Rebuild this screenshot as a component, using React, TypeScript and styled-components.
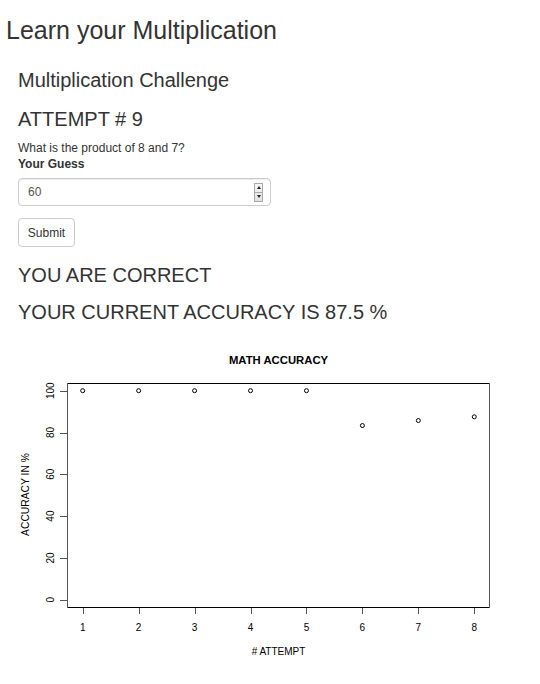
import React from "react";
import styled, { createGlobalStyle } from "styled-components";

const Global = createGlobalStyle`
  html, body { margin: 0; padding: 0; background: #fff; }
  body {
    font-family: "Liberation Sans", Arial, sans-serif;
    color: #333;
  }
`;

const Page = styled.div`
  width: 540px;
  display: flex;
  flex-direction: column;
`;

const Title = styled.h2`
  margin: 15px 0 0 0;
  padding-left: 6px;
  font-size: 25px;
  line-height: 30px;
  font-weight: 400;
  color: #333;
`;

const Main = styled.div`
  padding: 0 18px;
  display: flex;
  flex-direction: column;
  align-items: flex-start;
`;

const Heading = styled.h3<{ $gap: number }>`
  margin: ${(p) => p.$gap}px 0 0 0;
  font-size: 20px;
  line-height: 24px;
  font-weight: 400;
  color: #333;
`;

const Question = styled.p`
  margin: 9px 0 0 0;
  font-size: 12px;
  line-height: 16px;
`;

const Label = styled.label`
  font-size: 12px;
  line-height: 16px;
  font-weight: 700;
`;

const InputBox = styled.div`
  margin-top: 6px;
  box-sizing: border-box;
  width: 253px;
  height: 28px;
  border: 1px solid #ccc;
  border-radius: 4px;
  box-shadow: inset 0 1px 1px rgba(0, 0, 0, 0.075);
  display: flex;
  align-items: center;
  padding: 0 7px 0 9px;
`;

const InputText = styled.span`
  flex: 1;
  font-size: 12px;
  color: #555;
  line-height: 16px;
`;

const Spinner = styled.div`
  width: 9px;
  height: 19px;
  box-sizing: border-box;
  border: 1px solid #a9a9a9;
  display: flex;
  flex-direction: column;
  background: linear-gradient(#f6f6f6, #e2e2e2);
`;

const SpinHalf = styled.div<{ $up?: boolean }>`
  flex: 1;
  display: flex;
  align-items: center;
  justify-content: center;
  border-top: ${(p) => (p.$up ? "none" : "1px solid #a9a9a9")};
  &::after {
    content: "";
    width: 0;
    height: 0;
    border-left: 2px solid transparent;
    border-right: 2px solid transparent;
    ${(p) =>
      p.$up
        ? "border-bottom: 3px solid #222;"
        : "border-top: 3px solid #222;"}
  }
`;

const Button = styled.button`
  margin-top: 12px;
  box-sizing: border-box;
  width: 57px;
  height: 29px;
  padding: 0;
  border: 1px solid #ccc;
  border-radius: 4px;
  background: #fff;
  font-family: "Liberation Sans", Arial, sans-serif;
  font-size: 12px;
  color: #333;
`;

const PlotSvg = styled.svg`
  display: block;
  margin-top: 6px;
  width: 540px;
  height: 354px;
`;

const values = [100, 100, 100, 100, 100, 500 / 6, 600 / 7, 87.5];
const xs = (v: number) => 82.7 + (v - 1) * 55.94;
const ys = (v: number) => 599.7 - v * 2.09;

function Plot() {
  const yTicks = [0, 20, 40, 60, 80, 100];
  const font = "'Liberation Sans', Arial, sans-serif";
  return (
    <PlotSvg viewBox="0 330 540 354">
      <text
        x={278.5}
        y={364}
        textAnchor="middle"
        fontFamily={font}
        fontSize={11.3}
        fontWeight={700}
        fill="#000"
      >
        MATH ACCURACY
      </text>
      <line x1={67} y1={383.5} x2={490} y2={383.5} stroke="#000" strokeWidth={1} />
      <line x1={67} y1={607.5} x2={490} y2={607.5} stroke="#000" strokeWidth={1} />
      <line x1={67.5} y1={383} x2={67.5} y2={608} stroke="#555" strokeWidth={1} />
      <line x1={489.5} y1={383} x2={489.5} y2={608} stroke="#555" strokeWidth={1} />
      {yTicks.map((t) => (
        <g key={t}>
          <line x1={60} y1={Math.round(ys(t)) + 0.5} x2={67} y2={Math.round(ys(t)) + 0.5} stroke="#555" />
          <text
            transform={`translate(53.5 ${ys(t)}) rotate(-90)`}
            textAnchor="middle"
            fontFamily={font}
            fontSize={10}
            fill="#000"
          >
            {t}
          </text>
        </g>
      ))}
      {values.map((_, i) => (
        <g key={i}>
          <line
            x1={Math.round(xs(i + 1)) + 0.5}
            y1={608}
            x2={Math.round(xs(i + 1)) + 0.5}
            y2={614}
            stroke="#555"
          />
          <text
            x={xs(i + 1)}
            y={631}
            textAnchor="middle"
            fontFamily={font}
            fontSize={10}
            fill="#000"
          >
            {i + 1}
          </text>
        </g>
      ))}
      {values.map((v, i) => (
        <circle key={i} cx={xs(i + 1)} cy={ys(v)} r={2} fill="none" stroke="#000" strokeWidth={1} />
      ))}
      <text
        x={278.5}
        y={655}
        textAnchor="middle"
        fontFamily={font}
        fontSize={10}
        fill="#000"
      >
        # ATTEMPT
      </text>
      <text
        transform="translate(29 494.5) rotate(-90)"
        textAnchor="middle"
        fontFamily={font}
        fontSize={10.3}
        fill="#000"
      >
        ACCURACY IN %
      </text>
    </PlotSvg>
  );
}

export default function App() {
  return (
    <Page>
      <Global />
      <Title>Learn your Multiplication</Title>
      <Main>
        <Heading $gap={23}>Multiplication Challenge</Heading>
        <Heading $gap={15}>ATTEMPT # 9</Heading>
        <Question>What is the product of 8 and 7?</Question>
        <Label>Your Guess</Label>
        <InputBox>
          <InputText>60</InputText>
          <Spinner>
            <SpinHalf $up />
            <SpinHalf />
          </Spinner>
        </InputBox>
        <Button>Submit</Button>
        <Heading $gap={16}>YOU ARE CORRECT</Heading>
        <Heading $gap={13}>YOUR CURRENT ACCURACY IS 87.5 %</Heading>
      </Main>
      <Plot />
    </Page>
  );
}
